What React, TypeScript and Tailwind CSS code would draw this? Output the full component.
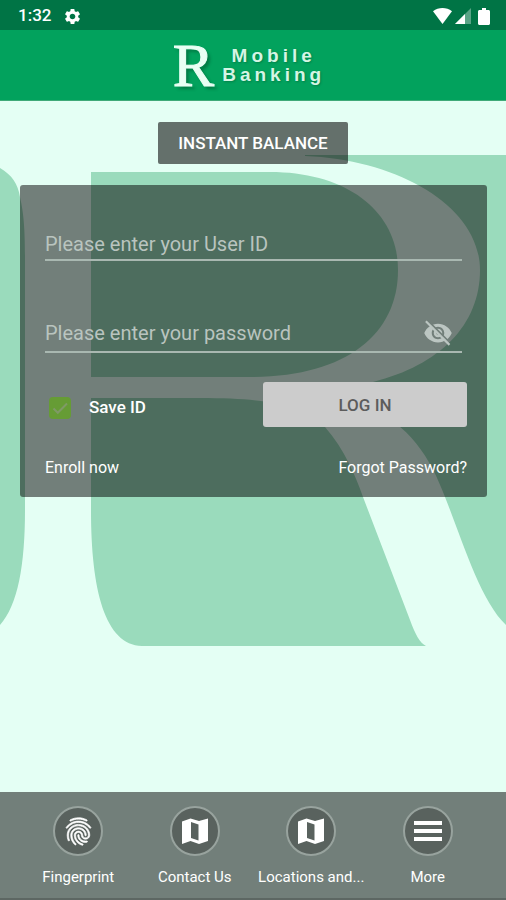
import { useState } from 'react';
import type { ReactNode } from 'react';
import { MdFingerprint, MdSettings } from 'react-icons/md';

function StatusBar() {
  return (
    <div className="flex h-[30px] items-center justify-between bg-[#007445] pt-[2px] pl-[18px] pr-4 text-white">
      <div className="flex items-center gap-3">
        <span className="text-[17px] font-medium">1:32</span>
        <MdSettings className="h-[19px] w-[19px]" />
      </div>
      <div className="flex items-center gap-[3px]">
        <svg className="h-4 w-[19px]" viewBox="0 0 19 16" fill="currentColor">
          <path d="M0 3.2C5.5-1 13.5-1 19 3.2L9.5 16z" />
        </svg>
        <svg className="h-4 w-4" viewBox="0 0 16 16" fill="currentColor">
          <path d="M16 0v16H0z" opacity="0.35" />
          <path d="M10 6v10H0z" />
        </svg>
        <svg className="ml-1 h-[17px] w-3" viewBox="0 0 12 17" fill="currentColor">
          <path d="M4 0h4v2h2.5c.8 0 1.5.7 1.5 1.5v12c0 .8-.7 1.5-1.5 1.5h-9C.7 17 0 16.3 0 15.5v-12C0 2.7.7 2 1.5 2H4z" />
        </svg>
      </div>
    </div>
  );
}

function Header() {
  return (
    <header className="flex h-[71px] items-center justify-center gap-2 border-b border-[#3faa78] bg-[#02a25d] pr-2 text-[#e9fff4]">
      <span className="font-['Liberation_Serif',serif] text-[62px] leading-[70px] [-webkit-text-stroke:1px_#e9fff4] [text-shadow:3px_3px_3px_rgba(0,60,30,0.4)]">
        R
      </span>
      <h1 className="text-center font-['Liberation_Sans',sans-serif] text-[19px] leading-[19px] font-bold tracking-[4px] text-[#d5f5e4] [text-shadow:1px_1px_2px_rgba(0,60,30,0.3)]">
        Mobile
        <br />
        Banking
      </h1>
    </header>
  );
}

function Backdrop() {
  return (
    <svg
      className="absolute inset-0 h-full w-full"
      viewBox="0 101 506 691"
      preserveAspectRatio="xMidYMin slice"
      fill="#9adbbc"
      aria-hidden="true"
    >
      <path d="M0 168C12 175 18 184 20 197C24 215 25 230 25 260V510C25 565 18 605 0 625Z" />
      <path d="M91 172H270C348 172 398 212 398 270C398 335 345 377 250 377H91Z" />
      <path d="M305 155H506V625C480 600 463 542 445 497C430 457 410 425 365 405L373 382C440 365 480 325 480 270C480 207 400 160 305 156Z" />
      <path d="M91 398H200C275 398 307 407 325 427C345 450 355 475 363 497L410 620C415 634 420 643 426 646H142C105 645 91 590 91 510Z" />
    </svg>
  );
}

function EyeOffIcon() {
  return (
    <svg className="h-[30px] w-[30px]" viewBox="0 0 24 24" fill="currentColor">
      <mask id="eye-slash">
        <rect width="24" height="24" fill="#fff" />
        <circle cx="12" cy="12" r="1.4" fill="#000" />
        <path d="M3.5 1.8L22.2 20.5" stroke="#000" strokeWidth="1.6" />
      </mask>
      <path
        mask="url(#eye-slash)"
        d="M12 4.5C7 4.5 2.73 7.61 1 12c1.73 4.39 6 7.5 11 7.5s9.27-3.11 11-7.5c-1.73-4.39-6-7.5-11-7.5zM12 17c-2.76 0-5-2.24-5-5s2.24-5 5-5 5 2.24 5 5-2.24 5-5 5zm0-8.4c-1.88 0-3.4 1.52-3.4 3.4s1.52 3.4 3.4 3.4 3.4-1.52 3.4-3.4-1.52-3.4-3.4-3.4z"
      />
      <path d="M2.3 2.6L21.2 21.5" stroke="currentColor" strokeWidth="1.7" />
    </svg>
  );
}

function MapIcon() {
  return (
    <svg className="h-[26px] w-[26px]" viewBox="0 0 26 26" fill="currentColor">
      <path
        fillRule="evenodd"
        d="M0 3.5L8.5 0.5L17 3L26 0.5V23L17 26L8.5 23L0 26ZM9 4V20L16.5 22.5V6.5Z"
      />
    </svg>
  );
}

function LoginCard() {
  const [saveId, setSaveId] = useState(true);
  const [showPassword, setShowPassword] = useState(false);

  return (
    <form
      className="mt-[21px] ml-5 mr-[19px] rounded-[3px] bg-black/50 pt-11 pr-5 pb-[17px] pl-[25px] text-white"
      onSubmit={(e) => e.preventDefault()}
    >
      <div className="mr-[5px] border-b-2 border-[#a9b8b1]">
        <input
          type="text"
          aria-label="User ID"
          placeholder="Please enter your User ID"
          className="block h-[30px] w-full bg-transparent text-[20px] outline-none placeholder:text-[#b9c4bf]"
        />
      </div>

      <div className="mr-[5px] mt-[54px] flex items-center border-b-2 border-[#a9b8b1] pr-[9px]">
        <input
          type={showPassword ? 'text' : 'password'}
          aria-label="Password"
          placeholder="Please enter your password"
          className="block h-9 min-w-0 flex-1 bg-transparent text-[20px] outline-none placeholder:text-[#b9c4bf]"
        />
        <button
          type="button"
          aria-label="Show password"
          onClick={() => setShowPassword(!showPassword)}
          className="text-[#bcc6c2]"
        >
          <EyeOffIcon />
        </button>
      </div>

      <div className="mt-[29px] flex items-center justify-between">
        <label className="flex items-center gap-[18px] pt-[6px] pl-1 text-[17px] font-medium">
          <span className="relative">
            <input
              type="checkbox"
              checked={saveId}
              onChange={(e) => setSaveId(e.target.checked)}
              className="block h-[22px] w-[22px] appearance-none rounded-sm border-2 border-[#669c35] checked:bg-[#669c35]"
            />
            {saveId && (
              <svg className="pointer-events-none absolute inset-0 h-full w-full" viewBox="0 0 22 22" fill="none">
                <path d="M4.5 11.5l4.3 4.3L18 6.5" stroke="#7f9a66" strokeWidth="2" />
              </svg>
            )}
          </span>
          Save ID
        </label>
        <button
          type="submit"
          className="h-[45px] w-[204px] rounded-[3px] bg-[#cccccc] pt-[2px] text-[17px] font-medium text-[#5c5c5c]"
        >
          LOG IN
        </button>
      </div>

      <div className="mt-[29px] flex justify-between text-[16px] leading-6">
        <a href="#enroll">Enroll now</a>
        <a href="#forgot">Forgot Password?</a>
      </div>
    </form>
  );
}

function NavItem({ label, children }: { label: string; children: ReactNode }) {
  return (
    <button type="button" className="flex flex-1 flex-col items-center gap-[9px] text-[15px] leading-6">
      <span className="flex h-[50px] w-[50px] items-center justify-center rounded-full border-2 border-[#98a39e] bg-[#59625e]">
        {children}
      </span>
      {label}
    </button>
  );
}

function BottomNav() {
  return (
    <nav className="flex border-b-2 border-[#5d6763] bg-[#727f7a] px-5 pt-[14px] pb-[9px] text-white">
      <NavItem label="Fingerprint">
        <MdFingerprint className="h-[33px] w-[33px] stroke-current stroke-[0.5] [&>path:first-child]:stroke-none" />
      </NavItem>
      <NavItem label="Contact Us">
        <MapIcon />
      </NavItem>
      <NavItem label="Locations and...">
        <MapIcon />
      </NavItem>
      <NavItem label="More">
        <svg className="h-5 w-7" viewBox="0 0 28 20" fill="currentColor">
          <rect width="28" height="4" />
          <rect y="8" width="28" height="4" />
          <rect y="16" width="28" height="4" />
        </svg>
      </NavItem>
    </nav>
  );
}

export default function App() {
  return (
    <div className="flex min-h-screen flex-col bg-[#e4fff4] font-['Roboto',sans-serif]">
      <StatusBar />
      <Header />
      <main className="relative flex-1">
        <Backdrop />
        <div className="relative pt-[21px]">
          <button
            type="button"
            className="mx-auto block h-[42px] rounded-[2px] bg-black/56 px-5 pt-[2px] text-[17px] font-medium text-white"
          >
            INSTANT BALANCE
          </button>
          <LoginCard />
        </div>
      </main>
      <BottomNav />
    </div>
  );
}
